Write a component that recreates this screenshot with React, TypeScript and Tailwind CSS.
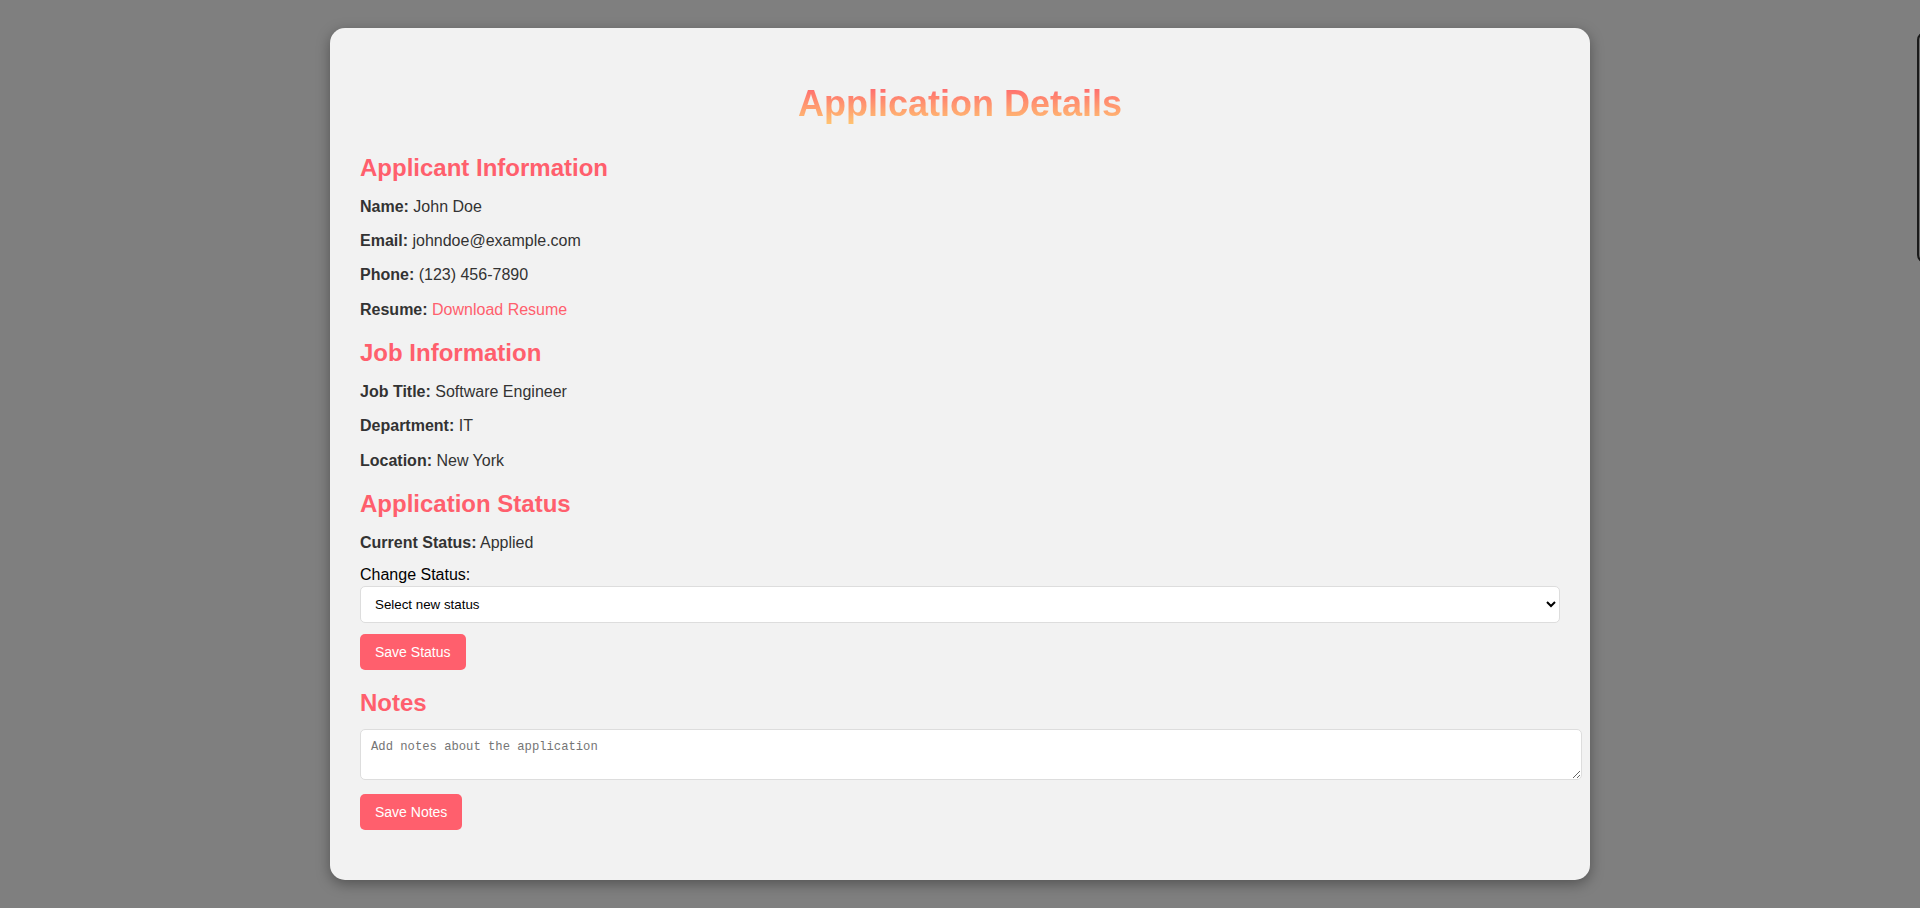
import React from 'react';

const applicant = [
    { label: 'Name:', value: 'John Doe' },
    { label: 'Email:', value: 'johndoe@example.com' },
    { label: 'Phone:', value: '(123) 456-7890' },
];

const job = [
    { label: 'Job Title:', value: 'Software Engineer' },
    { label: 'Department:', value: 'IT' },
    { label: 'Location:', value: 'New York' },
];

function Heading({ children, className = '' }: { children: React.ReactNode; className?: string }) {
    return (
        <h2 className={`text-[24px] leading-[27.6px] font-bold text-[#ff5f6d] ${className}`}>
            {children}
        </h2>
    );
}

function Field({ label, children, className = 'mt-4' }: { label: string; children: React.ReactNode; className?: string }) {
    return (
        <p className={`text-[16px] leading-[18.4px] text-[#333] ${className}`}>
            <strong className="font-bold">{label}</strong> {children}
        </p>
    );
}

function PinkButton({ children, className = '' }: { children: React.ReactNode; className?: string }) {
    return (
        <button className={`self-start h-[36px] rounded-[5px] bg-[#ff5f6d] px-[15px] text-[14px] leading-4 text-white ${className}`}>
            {children}
        </button>
    );
}

export default function App() {
    return (
        <div className="relative min-h-screen overflow-hidden bg-[#7f7f7f] pt-[28px] pb-[28px] font-['Liberation_Sans',Arial,sans-serif]">
            <div className="mx-auto flex w-[1260px] flex-col rounded-[15px] bg-[#f2f2f2] px-[30px] pt-[30px] pb-[50px] shadow-[0_4px_14px_rgba(0,0,0,0.35)]">
                <h1 className="mt-[26px] bg-gradient-to-b from-[#ff5f6d] to-[#ffc371] bg-clip-text text-center text-[36px] leading-[40px] font-bold text-transparent">
                    Application Details
                </h1>

                <Heading className="mt-[30px]">Applicant Information</Heading>
                {applicant.map((f) => (
                    <Field key={f.label} label={f.label}>{f.value}</Field>
                ))}
                <Field label="Resume:">
                    <a href="#" className="text-[#ff5f6d] no-underline">Download Resume</a>
                </Field>

                <Heading className="mt-5">Job Information</Heading>
                {job.map((f) => (
                    <Field key={f.label} label={f.label}>{f.value}</Field>
                ))}

                <Heading className="mt-5">Application Status</Heading>
                <Field label="Current Status:">Applied</Field>
                <label htmlFor="status" className="mt-[14px] block text-[16px] leading-[18.4px] text-black">
                    Change Status:
                </label>
                <select
                    id="status"
                    defaultValue=""
                    className="mt-[2px] h-[37px] w-full rounded-[5px] border border-[#ddd] bg-white px-[10px] text-[13.33px] text-black"
                >
                    <option value="">Select new status</option>
                    <option value="reviewed">Reviewed</option>
                    <option value="interview">Interview</option>
                    <option value="offered">Offered</option>
                    <option value="rejected">Rejected</option>
                </select>
                <PinkButton className="mt-[11px]">Save Status</PinkButton>

                <Heading className="mt-[19px]">Notes</Heading>
                <textarea
                    placeholder="Add notes about the application"
                    className="mt-3 h-[51px] w-[1222px] max-w-none rounded-[5px] border border-[#ddd] bg-white p-[10px] font-['Liberation_Mono',monospace] text-[12.2px] leading-[15px] placeholder:text-[#757575]"
                />
                <PinkButton className="mt-[14px]">Save Notes</PinkButton>
            </div>

            <div className="absolute top-[32px] left-[1917px] h-[231px] w-[40px] rounded-[8px] border-2 border-[#1a1a1a] bg-[#6e6e6e]" />
        </div>
    );
}
